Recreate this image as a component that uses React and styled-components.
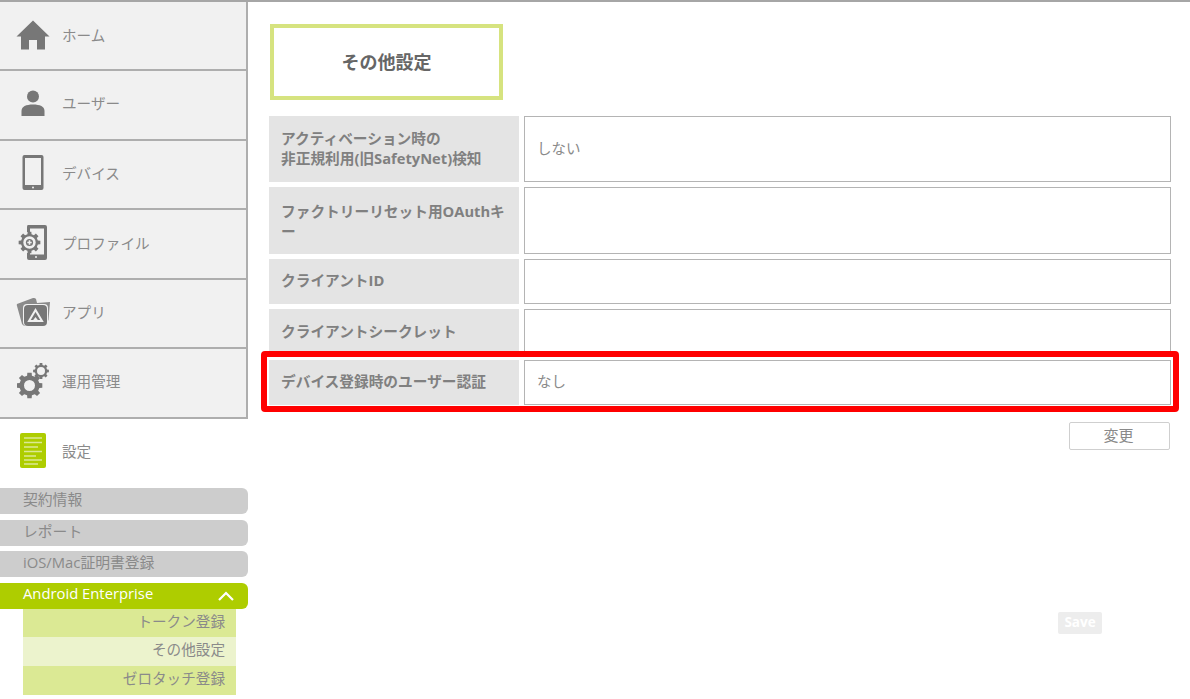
import React from "react";
import styled, { createGlobalStyle } from "styled-components";

const Global = createGlobalStyle`
  html, body { margin: 0; padding: 0; background: #fff; overflow: hidden; }
  * { box-sizing: border-box; }
  body { font-family: "Noto Sans CJK JP", sans-serif; color: #777; }
`;
const Page = styled.div`
  width: 1190px; height: 699px; display: flex; border-top: 2px solid #a6a6a6; overflow: hidden;
  font-family: "Open Sans", "Noto Sans CJK JP", sans-serif;
`;
const Side = styled.nav`width: 248px; flex: none; display: flex; flex-direction: column;`;
const NavItem = styled.div`
  height: ${p => p.$h}px; display: flex; align-items: center; background: #f1f1f1;
  border-right: 2px solid #aeaeae; border-bottom: 2px solid #aeaeae;
  font-size: 14.6px; color: #8a8a8a; padding-bottom: ${p => p.$pb}px;
`;
const IconSlot = styled.span`width: 62px; flex: none; display: flex; justify-content: center; padding-left: 4px;
  svg { display: block; }`;
const SettingRow = styled.div`height: 69px; display: flex; align-items: center; font-size: 14.6px; color: #8a8a8a; padding-bottom: 6px;`;
const Pills = styled.div`display: flex; flex-direction: column; gap: 5.67px;`;
const Pill = styled.div`
  height: 26px; border-radius: 0 6px 6px 0; padding: 0 10px 5px 23px; display: flex; align-items: center; justify-content: space-between;
  font-size: 14.8px; background: ${p => p.$on ? "#aecd00" : "#cdcdcd"}; color: ${p => p.$on ? "#fff" : "#8a8a8a"};
`;
const SubList = styled.div`margin-left: 23px; width: 213px; display: flex; flex-direction: column;`;
const SubItem = styled.div`
  height: ${p => p.$h}px; display: flex; align-items: center; justify-content: flex-end; padding: 0 11px 5px 0; font-size: 14.6px; color: #8a8a8a;
  background: ${p => p.$on ? "#ecf3cd" : "#dbe994"};
`;
const Main = styled.main`flex: 1; padding: 22px 19px 0 21px; display: flex; flex-direction: column; position: relative;`;
const Title = styled.h2`
  margin: 0 0 16px 1px; width: 233px; height: 76px; border: 4px solid #d6e37f; display: flex; align-items: center; justify-content: center;
  font-size: 18px; font-weight: 700; color: #666; padding-bottom: 2px;
`;
const Table = styled.div`display: flex; flex-direction: column; gap: 5px; position: relative;`;
const Row = styled.div`display: grid; grid-template-columns: 250px 1fr; column-gap: 5px; height: ${p => p.$h}px; margin-top: ${p => p.$mt || 0}px;`;
const Label = styled.div`
  background: #e4e4e4; padding: 0 12px; display: flex; align-items: center; font-size: 14.7px; font-weight: 700; color: #808080;
  padding-bottom: ${p => p.$pb ?? 3}px;
  span { display: block; line-height: 20px; }
`;
const Value = styled.div`
  border: 1px solid #b4b4b4; padding: 0 11px ${p => p.$pb ?? 3}px 12px; display: flex; align-items: center; font-size: 14.5px; color: #8a8a8a;
`;
const Highlight = styled.div`
  position: absolute; left: -8px; right: -8px; top: 235px; height: 61px; border: 6px solid #ff0000; border-radius: 4px; pointer-events: none;
`;
const Actions = styled.div`display: flex; justify-content: flex-end; margin-top: 17px; padding-right: 1px;`;
const ChangeBtn = styled.button`
  width: 101px; height: 28px; background: #fff; border: 1px solid #cfcfcf; border-radius: 2px; font: inherit; font-size: 15px; color: #8a8a8a; padding: 0 2px 3px 0;
`;
const SaveRow = styled.div`display: flex; justify-content: flex-end; margin-top: 162px; padding-right: 69px;`;
const SaveBtn = styled.button`
  width: 44px; height: 22px; border: 0; border-radius: 2px; background: #ededed; color: #fff; font: inherit; font-size: 13.5px; font-weight: 700; padding: 0 0 2px;
`;

const G = "#777";
const Home = () => (
  <svg width="34" height="30" viewBox="0 0 34 30"><path fill={G} d="M17 0.5 33.5 16.5H29V29.5H21V20H13V29.5H5V16.5H0.5Z" /></svg>
);
const User = () => (
  <svg width="24" height="26" viewBox="0 0 24 26"><circle fill={G} cx="12" cy="6.5" r="6" /><path fill={G} d="M0.5 26V21C0.5 16.5 5 14.5 12 14.5S23.5 16.5 23.5 21V26Z" /></svg>
);
const Phone = () => (
  <svg width="22" height="35" viewBox="0 0 22 35"><rect fill={G} width="21" height="35" x="0.5" rx="2" /><rect fill="#f1f1f1" x="3" y="3" width="16" height="27" /><circle fill="#f1f1f1" cx="11" cy="32.5" r="1" /></svg>
);
const gearPath = (cx, cy, r, hole) => {
  let d = "";
  const n = 8;
  for (let i = 0; i < n; i++) {
    const a = (i / n) * Math.PI * 2;
    const w = 0.24;
    const pts = [[a - w, r * 0.78], [a - w * 0.7, r], [a + w * 0.7, r], [a + w, r * 0.78]];
    pts.forEach(([t, q], j) => {
      d += `${i === 0 && j === 0 ? "M" : "L"}${(cx + q * Math.cos(t)).toFixed(2)} ${(cy + q * Math.sin(t)).toFixed(2)}`;
    });
  }
  d += `Z M${cx + hole} ${cy}A${hole} ${hole} 0 1 0 ${cx - hole} ${cy}A${hole} ${hole} 0 1 0 ${cx + hole} ${cy}Z`;
  return d;
};
const Profile = () => (
  <svg width="30" height="35" viewBox="0 0 30 35">
    <path fill={G} d="M10 0H27Q29 0 29 2V33Q29 35 27 35H11Q9 35 9 33V28H12V29.5H26V3.5H12V7H9V2Q9 0 10 0Z" />
    <path fill={G} fillRule="evenodd" d={gearPath(11.5, 17.5, 11, 6.2)} />
    <circle fill={G} cx="11.5" cy="17.5" r="3.6" />
    <path fill="#f1f1f1" d="M10.7 15.3h1.6v1.4h1.4v1.6h-1.4v1.4h-1.6v-1.4H9.3v-1.6h1.4Z" />
    <circle fill="#f1f1f1" cx="18" cy="32" r="1" />
  </svg>
);
const Apps = () => (
  <svg width="35" height="30" viewBox="0 0 35 30">
    <path fill="#8a8a8a" d="M1 7 17 1Q19 0.5 20 2L21 6 34 5 32.5 23Q32 25 30 25L10 29Q7 29 6 27L1 9Q0.5 8 1 7Z" />
    <rect fill="#f1f1f1" x="7" y="7" width="25" height="22" rx="4" />
    <rect fill={G} x="8" y="8" width="23" height="21" rx="4" />
    <path fill="none" stroke="#f1f1f1" strokeWidth="2" d="M13 24 19.5 13 26 24Z" />
    <path fill="#f1f1f1" d="M16 24.5 19.5 20 23 24.5Z" />
  </svg>
);
const Gears = () => (
  <svg width="32" height="36" viewBox="0 0 32 36">
    <path fill={G} fillRule="evenodd" d={gearPath(12.5, 22.5, 13, 5.5)} />
    <path fill={G} fillRule="evenodd" d={gearPath(24, 8, 8, 4)} />
  </svg>
);
const Doc = () => (
  <svg width="26" height="35" viewBox="0 0 26 35">
    <rect fill="#aecd00" width="26" height="35" rx="2" />
    <path stroke="#dbe994" strokeWidth="1.6" d="M4 5H22M4 9.5H22M4 14H18M4 18.5H22M4 23H16M4 27H22M4 31H18" />
  </svg>
);
const Chevron = () => (
  <svg width="16" height="10" viewBox="0 0 16 10" style={{ marginRight: 4, marginTop: 5 }}><path fill="none" stroke="#fff" strokeWidth="2.2" d="M1 9 8 2 15 9" /></svg>
);

const navs = [
  ["ホーム", Home, 69, 2], ["ユーザー", User, 70, 5], ["デバイス", Phone, 69, 4],
  ["プロファイル", Profile, 70, 4], ["アプリ", Apps, 69, 4], ["運用管理", Gears, 70, 5],
];

export default function App() {
  return (
    <Page>
      <Global />
      <Side>
        {navs.map(([t, I, h, pb]) => (
          <NavItem key={t} $h={h} $pb={pb}><IconSlot><I /></IconSlot>{t}</NavItem>
        ))}
        <SettingRow><IconSlot><Doc /></IconSlot>設定</SettingRow>
        <Pills>
          <Pill>契約情報</Pill>
          <Pill>レポート</Pill>
          <Pill>iOS/Mac証明書登録</Pill>
          <Pill $on>Android Enterprise<Chevron /></Pill>
        </Pills>
        <SubList>
          <SubItem $h={28}>トークン登録</SubItem>
          <SubItem $h={29} $on>その他設定</SubItem>
          <SubItem $h={29}>ゼロタッチ登録</SubItem>
        </SubList>
      </Side>
      <Main>
        <Title>その他設定</Title>
        <Table>
          <Row $h={66}><Label $pb={3}><span>アクティベーション時の<br />非正規利用(旧SafetyNet)検知</span></Label><Value>しない</Value></Row>
          <Row $h={67}><Label $pb={0}><span>ファクトリーリセット用OAuthキー</span></Label><Value /></Row>
          <Row $h={45}><Label $pb={5}>クライアントID</Label><Value /></Row>
          <Row $h={45}><Label>クライアントシークレット</Label><Value /></Row>
          <Row $h={45} $mt={1}><Label $pb={5}>デバイス登録時のユーザー認証</Label><Value $pb={5}>なし</Value></Row>
          <Highlight />
        </Table>
        <Actions><ChangeBtn>変更</ChangeBtn></Actions>
        <SaveRow><SaveBtn>Save</SaveBtn></SaveRow>
      </Main>
    </Page>
  );
}
